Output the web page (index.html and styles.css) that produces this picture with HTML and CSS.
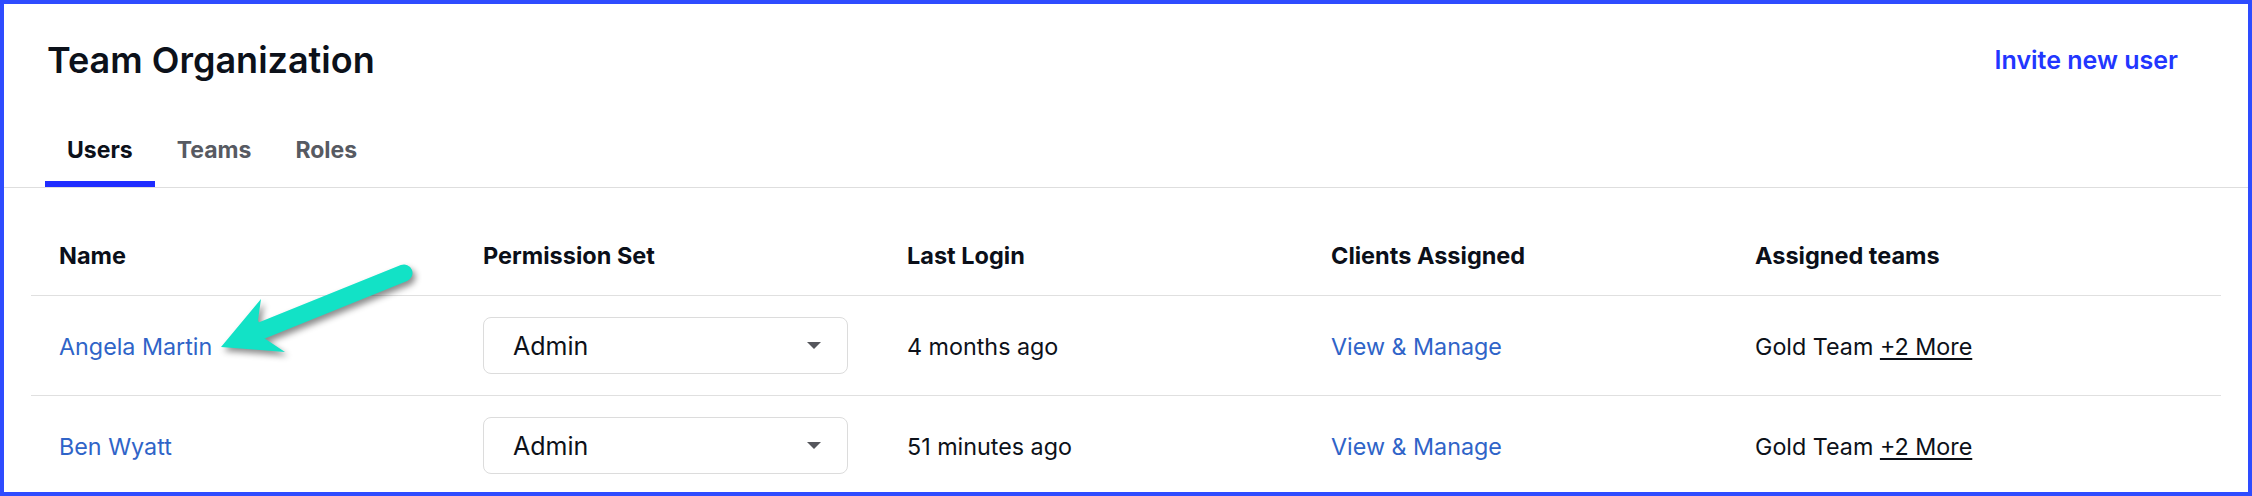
FILE: index.html
```html
<!DOCTYPE html>
<html lang="en">
<head>
<meta charset="utf-8">
<title>Team Organization</title>
<link rel="stylesheet" href="styles.css">
</head>
<body>
<div class="frame">
  <header class="page-head">
    <h1 class="title">Team Organization</h1>
    <a class="invite" href="#">Invite new user</a>
  </header>
  <nav class="tabs">
    <span class="tab active">Users</span>
    <span class="tab">Teams</span>
    <span class="tab">Roles</span>
  </nav>
  <div class="table">
    <div class="row head">
      <div class="cell">Name</div>
      <div class="cell">Permission Set</div>
      <div class="cell">Last Login</div>
      <div class="cell">Clients Assigned</div>
      <div class="cell">Assigned teams</div>
    </div>
    <div class="row">
      <div class="cell"><a class="link" href="#">Angela Martin</a></div>
      <div class="cell"><div class="select"><span>Admin</span><span class="caret"></span></div></div>
      <div class="cell">4 months ago</div>
      <div class="cell"><a class="link" href="#">View &amp; Manage</a></div>
      <div class="cell">Gold Team <a class="more" href="#">+2 More</a></div>
    </div>
    <div class="row">
      <div class="cell"><a class="link" href="#">Ben Wyatt</a></div>
      <div class="cell"><div class="select"><span>Admin</span><span class="caret"></span></div></div>
      <div class="cell">51 minutes ago</div>
      <div class="cell"><a class="link" href="#">View &amp; Manage</a></div>
      <div class="cell">Gold Team <a class="more" href="#">+2 More</a></div>
    </div>
  </div>
  <svg class="arrow" width="240" height="130" viewBox="190 250 240 130" aria-hidden="true">
    <line x1="404" y1="273" x2="258" y2="332" stroke="#12e2c6" stroke-width="17" stroke-linecap="round"/>
    <polygon points="221,347 261,299 258,320 264,338 285,352" fill="#12e2c6"/>
  </svg>
</div>
</body>
</html>
```

FILE: styles.css
```css
* { box-sizing: border-box; }

body {
  margin: 0;
  background: #ffffff;
  font-family: Inter, "Noto Sans", "Liberation Sans", sans-serif;
  color: #0d1119;
}

.frame {
  position: relative;
  width: 2252px;
  height: 496px;
  border: 4px solid #2e4cff;
  overflow: hidden;
  background: #ffffff;
}

.page-head {
  display: flex;
  justify-content: space-between;
  align-items: center;
  padding: 34px 70px 0 43px;
}

.title {
  margin: 0;
  font-size: 36px;
  line-height: 44px;
  font-weight: 600;
  color: #0c111a;
}

.invite {
  font-size: 25px;
  line-height: 30px;
  font-weight: 600;
  color: #2236ff;
  text-decoration: none;
}

.tabs {
  display: flex;
  margin-top: 54px;
  padding-left: 41px;
  border-bottom: 1px solid #dedede;
}

.tab {
  padding: 0 22px 16px;
  font-size: 23px;
  line-height: 29px;
  font-weight: 700;
  color: #575a62;
  border-bottom: 6px solid transparent;
}

.tab.active {
  color: #0c111a;
  border-bottom-color: #1f2cff;
}

.table {
  margin: 30px 27px 0;
}

.row {
  display: grid;
  grid-template-columns: 424px 424px 424px 424px 1fr;
  align-items: center;
  height: 100px;
  border-bottom: 1px solid #e0e0e0;
}

.row.head {
  height: 78px;
  padding-bottom: 25px;
  align-items: end;
}

.cell {
  padding-left: 28px;
  padding-top: 3px;
  font-size: 23.3px;
  line-height: 28px;
  color: #0d1119;
}

.head .cell {
  font-size: 23.5px;
  font-weight: 700;
  color: #0b0f19;
  padding-top: 0;
}

.link {
  color: #2f64c8;
  text-decoration: none;
}

.more {
  color: #0d1119;
  text-decoration: underline;
  text-decoration-thickness: 2px;
  text-underline-offset: 3px;
}

.select {
  display: flex;
  align-items: center;
  justify-content: space-between;
  width: 365px;
  height: 57px;
  margin-top: -3px;
  padding: 0 26px 0 29px;
  border: 1px solid #dcdcdc;
  border-radius: 8px;
  font-size: 25px;
  color: #0d1119;
}

.caret {
  width: 0;
  height: 0;
  border-left: 7px solid transparent;
  border-right: 7px solid transparent;
  border-top: 7px solid #55565c;
}

.arrow {
  position: absolute;
  left: 186px;
  top: 246px;
  filter: drop-shadow(3px 4px 3px rgba(0, 0, 0, 0.45));
}
```
